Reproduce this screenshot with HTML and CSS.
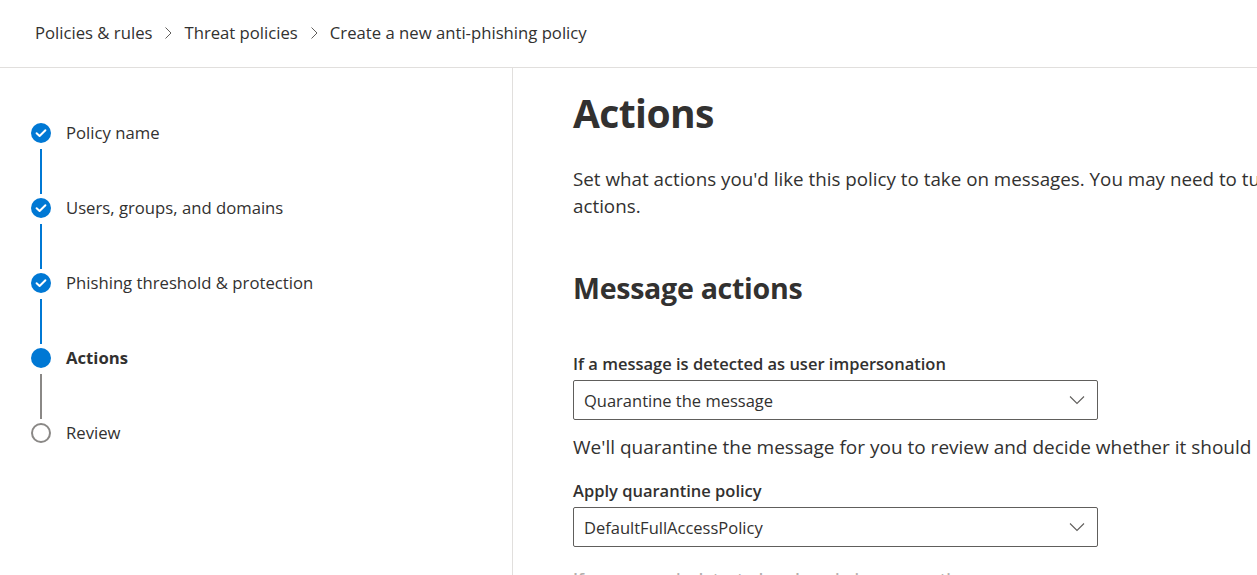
FILE: index.html
```html
<!DOCTYPE html>
<html lang="en">
<head>
<meta charset="utf-8">
<title>Create a new anti-phishing policy</title>
<link rel="stylesheet" href="styles.css">
</head>
<body>
<header class="topbar">
  <nav class="crumbs">
    <span class="crumb">Policies &amp; rules</span>
    <svg class="sep" width="10" height="14" viewBox="0 0 10 14"><path d="M2.5 1.5 L8 7 L2.5 12.5" fill="none" stroke="#605e5c" stroke-width="1"/></svg>
    <span class="crumb">Threat policies</span>
    <svg class="sep" width="10" height="14" viewBox="0 0 10 14"><path d="M2.5 1.5 L8 7 L2.5 12.5" fill="none" stroke="#605e5c" stroke-width="1"/></svg>
    <span class="crumb">Create a new anti-phishing policy</span>
  </nav>
</header>
<div class="layout">
  <aside class="wizard">
    <ol class="steps">
      <li class="step done">
        <div class="marker">
          <span class="dot"><svg width="20" height="20" viewBox="0 0 20 20"><path d="M5.6 10.2 L8.6 13 L14.4 7.2" fill="none" stroke="#fff" stroke-width="2" stroke-linecap="round" stroke-linejoin="round"/></svg></span>
          <span class="line"></span>
        </div>
        <span class="label">Policy name</span>
      </li>
      <li class="step done">
        <div class="marker">
          <span class="dot"><svg width="20" height="20" viewBox="0 0 20 20"><path d="M5.6 10.2 L8.6 13 L14.4 7.2" fill="none" stroke="#fff" stroke-width="2" stroke-linecap="round" stroke-linejoin="round"/></svg></span>
          <span class="line"></span>
        </div>
        <span class="label">Users, groups, and domains</span>
      </li>
      <li class="step done">
        <div class="marker">
          <span class="dot"><svg width="20" height="20" viewBox="0 0 20 20"><path d="M5.6 10.2 L8.6 13 L14.4 7.2" fill="none" stroke="#fff" stroke-width="2" stroke-linecap="round" stroke-linejoin="round"/></svg></span>
          <span class="line"></span>
        </div>
        <span class="label">Phishing threshold &amp; protection</span>
      </li>
      <li class="step current">
        <div class="marker">
          <span class="dot"></span>
          <span class="line gray"></span>
        </div>
        <span class="label">Actions</span>
      </li>
      <li class="step todo">
        <div class="marker">
          <span class="dot"></span>
        </div>
        <span class="label">Review</span>
      </li>
    </ol>
  </aside>
  <main class="content">
    <h1 class="title">Actions</h1>
    <p class="desc">Set what actions you'd like this policy to take on messages. You may need to turn on protection settings to configure these<br>actions.</p>
    <h2 class="section">Message actions</h2>
    <div class="field">
      <div class="field-label">If a message is detected as user impersonation</div>
      <div class="select"><span>Quarantine the message</span><svg width="16" height="10" viewBox="0 0 16 10"><path d="M1 1.5 L8 8.5 L15 1.5" fill="none" stroke="#605e5c" stroke-width="1.1"/></svg></div>
      <div class="help">We'll quarantine the message for you to review and decide whether it should be released.</div>
    </div>
    <div class="field">
      <div class="field-label">Apply quarantine policy</div>
      <div class="select"><span>DefaultFullAccessPolicy</span><svg width="16" height="10" viewBox="0 0 16 10"><path d="M1 1.5 L8 8.5 L15 1.5" fill="none" stroke="#605e5c" stroke-width="1.1"/></svg></div>
    </div>
    <div class="faded">If a message is detected as domain impersonation</div>
  </main>
</div>
</body>
</html>
```
FILE: styles.css
```css
html, body {
  margin: 0;
  padding: 0;
  height: 100%;
  overflow: hidden;
  background: #fff;
}
body {
  font-family: "Open Sans", "Noto Sans", "Liberation Sans", sans-serif;
  color: #323130;
}
.topbar {
  height: 68px;
  border-bottom: 1px solid #e1dfdd;
  display: flex;
  align-items: center;
  padding-left: 35px;
  box-sizing: border-box;
}
.crumbs {
  display: flex;
  align-items: center;
  gap: 7px;
  font-size: 16.7px;
  color: #323130;
  margin-top: -2px;
}
.sep { margin: 0 4px; }
.layout {
  display: flex;
  height: calc(100% - 68px);
}
.wizard {
  width: 513px;
  flex: none;
  border-right: 1px solid #e1dfdd;
  box-sizing: border-box;
  padding-top: 55px;
  padding-left: 31px;
}
.steps {
  list-style: none;
  margin: 0;
  padding: 0;
}
.step {
  display: flex;
  gap: 15px;
  height: 75px;
}
.marker {
  width: 20px;
  display: flex;
  flex-direction: column;
  align-items: center;
}
.dot {
  width: 20px;
  height: 20px;
  border-radius: 50%;
  background: #0078d4;
  box-sizing: border-box;
  flex: none;
  display: block;
}
.dot svg { display: block; }
.todo .dot {
  background: #fff;
  border: 2px solid #8a8886;
}
.line {
  width: 2px;
  flex: 1;
  background: #0078d4;
  margin: 6px 0 4px;
}
.line.gray { background: #8a8886; }
.label {
  font-size: 16.7px;
  line-height: 20px;
  color: #323130;
}
.current .label { font-weight: 700; }
.content {
  padding-left: 60px;
  flex: 1;
  min-width: 0;
}
.title {
  margin: 19px 0 0;
  font-size: 39px;
  line-height: 52px;
  font-weight: 700;
  letter-spacing: -0.6px;
  color: #323130;
}
.desc {
  margin: 27px 0 0;
  font-size: 18.8px;
  line-height: 27px;
  white-space: nowrap;
}
.section {
  margin: 50px 0 0;
  font-size: 28.6px;
  line-height: 36px;
  font-weight: 700;
  letter-spacing: -0.3px;
}
.field { margin-top: 47px; }
.field + .field { margin-top: 21px; }
.field-label {
  font-size: 16.5px;
  font-weight: 600;
  line-height: 22px;
  margin-bottom: 5px;
}
.select {
  width: 525px;
  height: 40px;
  box-sizing: border-box;
  border: 1px solid #605e5c;
  border-radius: 2px;
  display: flex;
  align-items: center;
  justify-content: space-between;
  padding: 0 12px 0 10px;
  font-size: 16.5px;
}
.help {
  margin-top: 15px;
  font-size: 19px;
  line-height: 24px;
  white-space: nowrap;
}
.faded {
  margin-top: 20px;
  font-size: 16.5px;
  font-weight: 600;
  color: #b3b0ad;
}
```
